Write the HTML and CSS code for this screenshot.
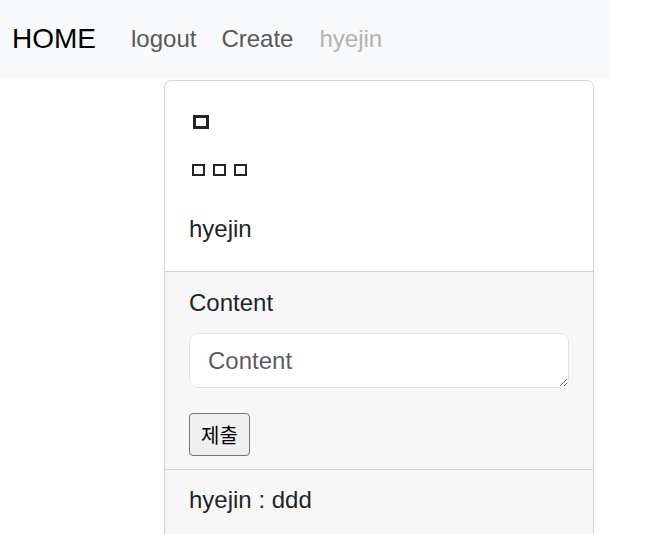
FILE: index.html
```html
<!DOCTYPE html>
<html lang="ko">
<head>
<meta charset="utf-8">
<title>HOME</title>
<link rel="stylesheet" href="styles.css">
</head>
<body>
<div class="page">
  <nav class="navbar">
    <a class="brand" href="#">HOME</a>
    <a class="nav-link" href="#">logout</a>
    <a class="nav-link" href="#">Create</a>
    <span class="nav-link disabled">hyejin</span>
  </nav>
  <div class="card">
    <div class="card-body">
      <div class="card-title"><span class="tofu tofu-lg"></span></div>
      <div class="card-subtitle">
        <span class="tofu tofu-sm"></span>
        <span class="tofu tofu-sm"></span>
        <span class="tofu tofu-sm"></span>
      </div>
      <p class="card-text">hyejin</p>
    </div>
    <form class="card-footer comment-form">
      <label class="form-label" for="content">Content</label>
      <textarea id="content" class="form-control" rows="1" placeholder="Content"></textarea>
      <button type="button" class="submit">제출</button>
    </form>
    <div class="card-footer comment">hyejin : ddd</div>
  </div>
</div>
</body>
</html>
```
FILE: styles.css
```css
html {
  overflow: hidden;
}
body {
  margin: 0;
  font-family: "Liberation Sans", Arial, sans-serif;
  color: #212529;
  background: #fff;
}
.page {
  width: 609px;
}
.navbar {
  display: flex;
  align-items: center;
  height: 78px;
  padding-left: 12px;
  background: #f8f9fa;
}
.brand {
  font-size: 28px;
  color: #000;
  text-decoration: none;
  margin-right: 23px;
}
.nav-link {
  font-size: 24px;
  padding: 0 12px;
  color: #595959;
  text-decoration: none;
}
.nav-link + .nav-link {
  margin-left: 1px;
}
.nav-link.disabled {
  color: #b3b3b3;
  margin-left: 2px;
}
.card {
  margin: 2px 0 0 164px;
  width: 428px;
  border: 1px solid #d3d3d3;
  border-radius: 7px;
  overflow: hidden;
  font-size: 24px;
  line-height: 36px;
}
.card-body {
  padding: 24px 24px 24px;
}
.card-title {
  height: 36px;
  box-sizing: border-box;
  padding: 10px 0 0 4px;
  margin-bottom: 12px;
}
.tofu {
  display: block;
  box-sizing: border-box;
  border-style: solid;
  border-color: #212529;
}
.tofu-lg {
  width: 16px;
  height: 14px;
  border-width: 3px;
}
.card-subtitle {
  display: flex;
  gap: 8px;
  height: 58px;
  box-sizing: border-box;
  padding: 11px 0 0 3px;
}
.tofu-sm {
  width: 13px;
  height: 12px;
  border-width: 2px;
}
.card-text {
  margin: 0;
}
.card-footer {
  background: #f7f7f7;
  border-top: 1px solid #d3d3d3;
  padding: 13px 24px 13px;
}
.comment-form {
  display: flex;
  flex-direction: column;
  align-items: flex-start;
}
.form-label {
  margin-bottom: 12px;
}
.form-control {
  box-sizing: border-box;
  width: 100%;
  height: 55px;
  padding: 9px 18px;
  margin: 0 0 25px;
  border: 1px solid #dee2e6;
  border-radius: 9px;
  background: #fff;
  font-family: "Liberation Sans", Arial, sans-serif;
  font-size: 24px;
  line-height: 36px;
  color: #212529;
  display: block;
}
.form-control::placeholder {
  color: rgba(33, 37, 41, 0.75);
}
.submit {
  box-sizing: border-box;
  height: 43px;
  padding: 0 11px;
  border: 1px solid #767676;
  border-radius: 4px;
  background: #efefef;
  color: #000;
  font-family: "Noto Sans CJK KR", "Liberation Sans", sans-serif;
  font-size: 20px;
  line-height: 1;
  display: flex;
  align-items: center;
}
.comment {
  padding: 12px 24px 40px;
}
```
